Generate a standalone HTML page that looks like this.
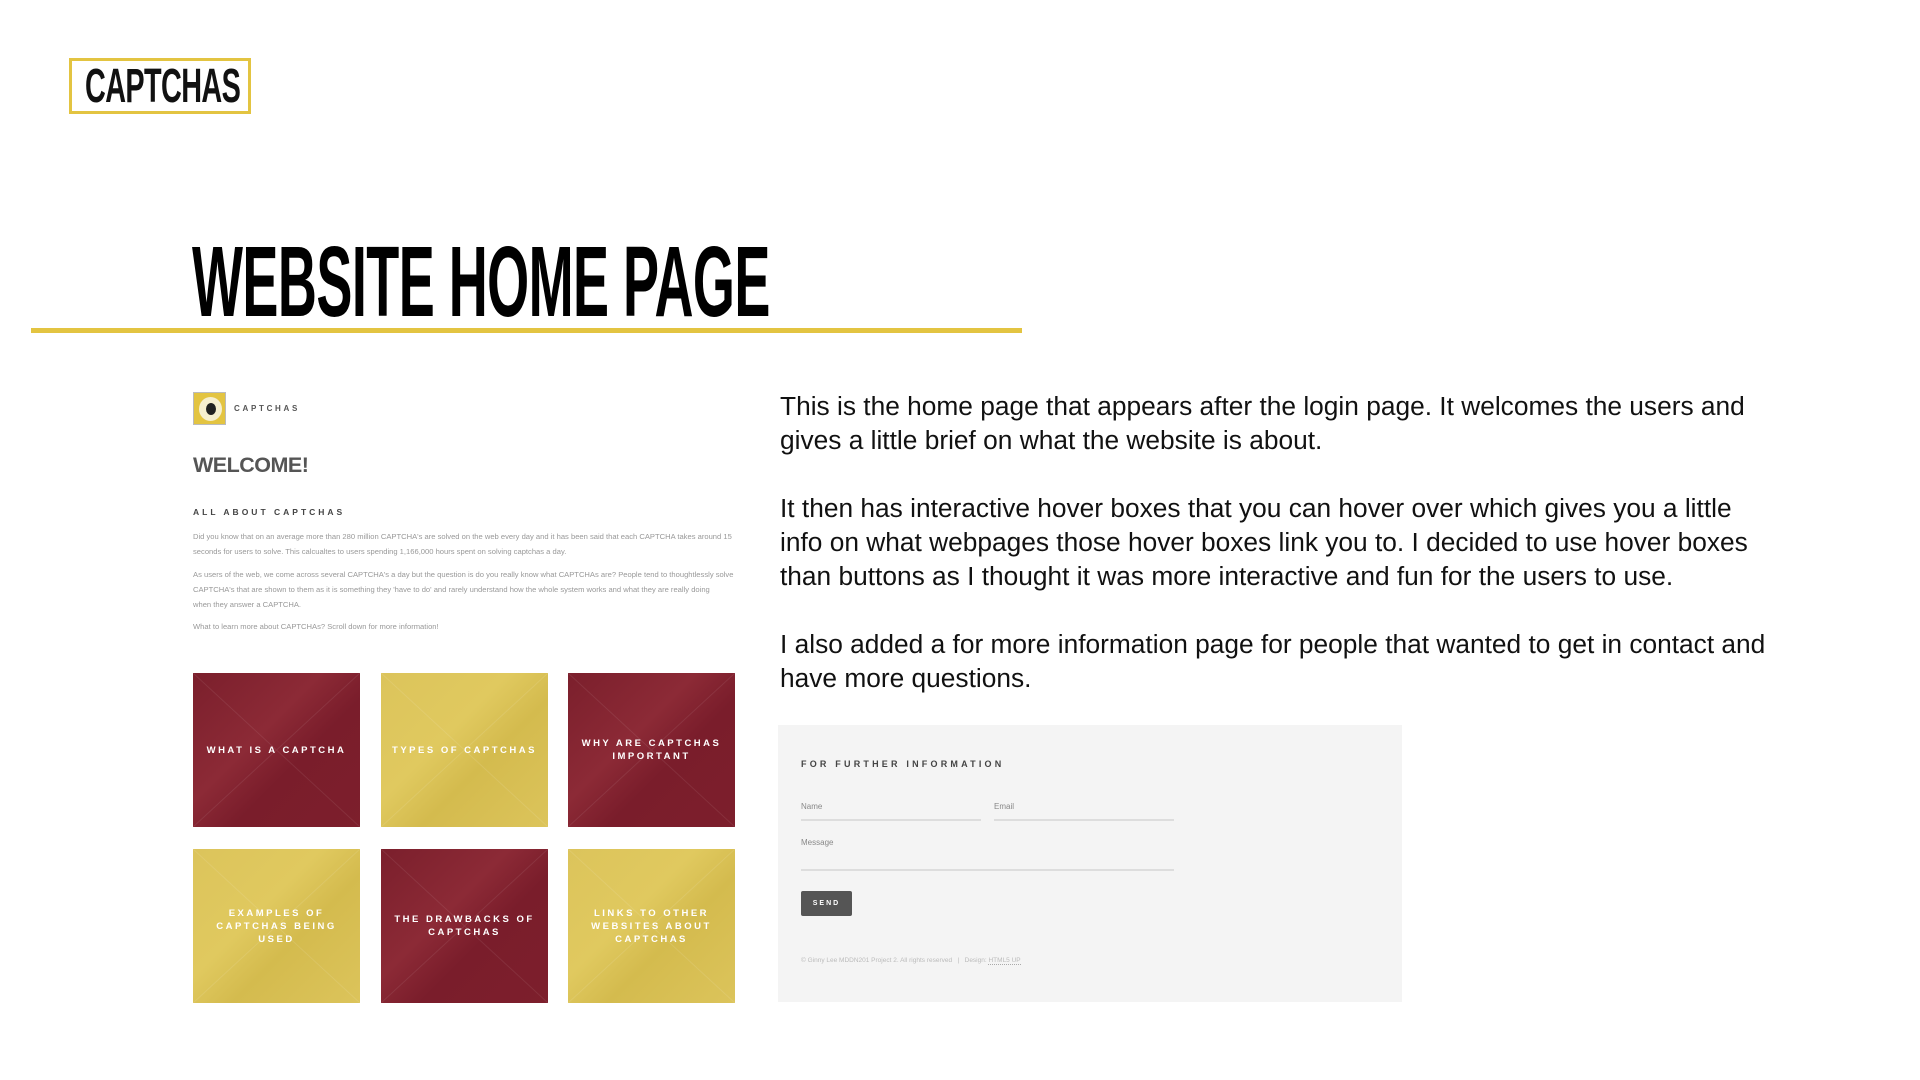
<!DOCTYPE html>
<html><head><meta charset="utf-8"><style>
*{margin:0;padding:0;box-sizing:border-box}
body{width:1920px;height:1080px;background:#fff;position:relative;overflow:hidden;font-family:"Liberation Sans",sans-serif}
.abs{position:absolute}
.logo{left:69px;top:58px;width:182px;height:56px;border:3px solid #e3c441}
.logo span{position:absolute;left:13px;top:2px;font-weight:bold;font-size:48px;line-height:48px;color:#111;transform:scaleX(0.6);transform-origin:left top;white-space:nowrap;letter-spacing:-1px}
.title{left:192px;top:232px;font-weight:bold;font-size:100px;line-height:100px;color:#000;transform:scaleX(0.54);transform-origin:left top;white-space:nowrap;letter-spacing:-1px}
.bar{left:31px;top:328px;width:991px;height:5px;background:#e3c441}
.rt{left:780px;font-size:26.3px;color:#111;white-space:nowrap;line-height:34px}
.small{font-size:7.6px;color:#999;white-space:nowrap;line-height:15px}
.tile{position:absolute;width:167px;height:154px;display:flex;align-items:center;justify-content:center;text-align:center;color:#fff;font-weight:bold;font-size:9.5px;letter-spacing:2.5px;line-height:13px;padding:0 10px;overflow:hidden}
.r{background:linear-gradient(135deg,#7b1f2c,#8c2a36 40%,#7a1d2b 60%,#7d1f2c)}
.y{background:linear-gradient(135deg,#dcc45b,#e0c95f 40%,#d4bb4e 60%,#dcc45b)}
.tile svg{position:absolute;left:0;top:0}
.form{left:778px;top:725px;width:624px;height:277px;background:#f4f4f4}
.lbl{font-size:8px;color:#888}
.ln{height:2px;background:#ddd}
</style></head><body>
<div class="abs logo"><span>CAPTCHAS</span></div>
<div class="abs title">WEBSITE HOME PAGE</div>
<div class="abs bar"></div>

<div class="abs" style="left:193px;top:392px;width:33px;height:33px;background:#e3c441;border:1px solid #bbb">
<div style="position:absolute;left:5px;top:4px;width:23px;height:24px;border-radius:50%;background:#f6efcf"></div>
<div style="position:absolute;left:12px;top:10px;width:10px;height:12px;border-radius:50%;background:#222"></div>
</div>
<div class="abs" style="left:234px;top:404px;font-size:8px;font-weight:bold;letter-spacing:2.7px;color:#555">CAPTCHAS</div>
<div class="abs" style="left:193px;top:453px;font-size:21.5px;font-weight:bold;color:#555;letter-spacing:-0.5px">WELCOME!</div>
<div class="abs" style="left:193px;top:507px;font-size:8.5px;font-weight:bold;letter-spacing:3px;color:#444">ALL ABOUT CAPTCHAS</div>
<div class="abs small" style="left:193px;top:529px">Did you know that on an average more than 280 million CAPTCHA's are solved on the web every day and it has been said that each CAPTCHA takes around 15<br>seconds for users to solve. This calcualtes to users spending 1,166,000 hours spent on solving captchas a day.</div>
<div class="abs small" style="left:193px;top:567px">As users of the web, we come across several CAPTCHA's a day but the question is do you really know what CAPTCHAs are? People tend to thoughtlessly solve<br>CAPTCHA's that are shown to them as it is something they 'have to do' and rarely understand how the whole system works and what they are really doing<br>when they answer a CAPTCHA.</div>
<div class="abs small" style="left:193px;top:619px">What to learn more about CAPTCHAs? Scroll down for more information!</div>

<div class="tile r" style="left:193px;top:673px"><svg width="167" height="154"><path d="M0 0L167 154M167 0L0 154" stroke="rgba(255,255,255,.08)"/></svg>WHAT IS A CAPTCHA</div>
<div class="tile y" style="left:381px;top:673px"><svg width="167" height="154"><path d="M0 0L167 154M167 0L0 154" stroke="rgba(255,255,255,.1)"/></svg>TYPES OF CAPTCHAS</div>
<div class="tile r" style="left:568px;top:673px"><svg width="167" height="154"><path d="M0 0L167 154M167 0L0 154" stroke="rgba(255,255,255,.08)"/></svg>WHY ARE CAPTCHAS IMPORTANT</div>
<div class="tile y" style="left:193px;top:849px"><svg width="167" height="154"><path d="M0 0L167 154M167 0L0 154" stroke="rgba(255,255,255,.1)"/></svg>EXAMPLES OF CAPTCHAS BEING USED</div>
<div class="tile r" style="left:381px;top:849px"><svg width="167" height="154"><path d="M0 0L167 154M167 0L0 154" stroke="rgba(255,255,255,.08)"/></svg>THE DRAWBACKS OF CAPTCHAS</div>
<div class="tile y" style="left:568px;top:849px"><svg width="167" height="154"><path d="M0 0L167 154M167 0L0 154" stroke="rgba(255,255,255,.1)"/></svg>LINKS TO OTHER WEBSITES ABOUT CAPTCHAS</div>

<div class="abs rt" style="top:389px">This is the home page that appears after the login page. It welcomes the users and<br>gives a little brief on what the website is about.</div>
<div class="abs rt" style="top:491px">It then has interactive hover boxes that you can hover over which gives you a little<br>info on what webpages those hover boxes link you to. I decided to use hover boxes<br>than buttons as I thought it was more interactive and fun for the users to use.</div>
<div class="abs rt" style="top:627px">I also added a for more information page for people that wanted to get in contact and<br>have more questions.</div>

<div class="abs form"></div>
<div class="abs" style="left:801px;top:759px;font-size:9px;font-weight:bold;letter-spacing:3.2px;color:#444">FOR FURTHER INFORMATION</div>
<div class="abs lbl" style="left:801px;top:802px">Name</div>
<div class="abs lbl" style="left:994px;top:802px">Email</div>
<div class="abs ln" style="left:801px;top:819px;width:180px"></div>
<div class="abs ln" style="left:994px;top:819px;width:180px"></div>
<div class="abs lbl" style="left:801px;top:838px">Message</div>
<div class="abs ln" style="left:801px;top:869px;width:373px"></div>
<div class="abs" style="left:801px;top:891px;width:51px;height:25px;background:#555;border-radius:2px;color:#fff;font-size:7px;font-weight:bold;letter-spacing:2px;text-align:center;line-height:25px">SEND</div>
<div class="abs" style="left:801px;top:957px;font-size:6.5px;color:#bbb;white-space:nowrap">© Ginny Lee MDDN201 Project 2. All rights reserved &nbsp; | &nbsp; Design: <span style="border-bottom:1px dotted #aaa">HTML5 UP</span></div>
</body></html>
